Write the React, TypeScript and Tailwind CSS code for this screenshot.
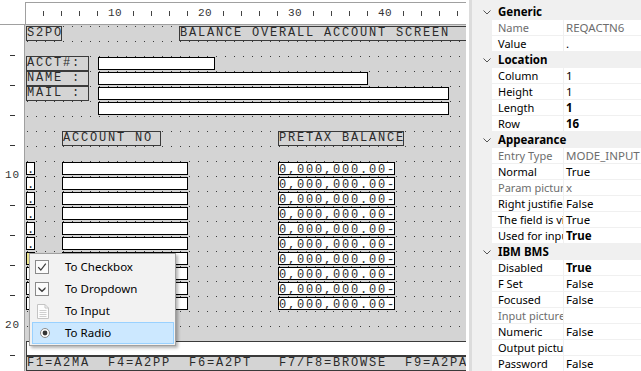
import React from "react";

const mono =
  "font-['Liberation_Mono',monospace] text-[12px] tracking-[1.8px] text-[#2b2b2b]";

function Row({ children }: { children?: React.ReactNode }) {
  return (
    <div className="grid h-[15px] shrink-0 grid-cols-[repeat(60,9px)] grid-rows-[15px]">
      {children}
    </div>
  );
}

function Lbl({ cls, text, bg }: { cls: string; text: string; bg?: string }) {
  return (
    <div
      className={`${cls} ${bg ?? ""} h-[15px] border border-[#3a3a3a] leading-[13px] whitespace-pre ${mono}`}
    >
      {text}
    </div>
  );
}

function Inp({ cls, text, sel }: { cls: string; text?: string; sel?: boolean }) {
  return (
    <div
      className={`${cls} mt-[1px] h-[13px] border border-black ${
        sel ? "bg-[#ece48c]" : "bg-white"
      } leading-[14px] whitespace-pre ${mono}`}
    >
      {text ?? ""}
    </div>
  );
}

type P = { cat?: string; name?: string; value?: string; gray?: boolean; bold?: boolean };

const props: P[] = [
  { cat: "Generic" },
  { name: "Name", value: "REQACTN6", gray: true },
  { name: "Value", value: "." },
  { cat: "Location" },
  { name: "Column", value: "1" },
  { name: "Height", value: "1" },
  { name: "Length", value: "1", bold: true },
  { name: "Row", value: "16", bold: true },
  { cat: "Appearance" },
  { name: "Entry Type", value: "MODE_INPUT", gray: true },
  { name: "Normal", value: "True" },
  { name: "Param picture", value: "x", gray: true },
  { name: "Right justified", value: "False" },
  { name: "The field is visible", value: "True" },
  { name: "Used for input", value: "True", bold: true },
  { cat: "IBM BMS" },
  { name: "Disabled", value: "True", bold: true },
  { name: "F Set", value: "False" },
  { name: "Focused", value: "False" },
  { name: "Input picture", value: "", gray: true },
  { name: "Numeric", value: "False" },
  { name: "Output picture", value: "" },
  { name: "Password", value: "False" },
];

const topCells = Array.from({ length: 24 }, (_, i) => ((i + 1) % 5 === 0 ? String(((i + 1) / 5) * 10) : ""));
const leftCells = Array.from({ length: 11 }, (_, i) => ((i + 1) % 5 === 0 ? String(((i + 1) / 5) * 10) : ""));
const dataRows = Array.from({ length: 10 }, (_, i) => i);

function CheckIcon() {
  return (
    <svg width="14" height="14" viewBox="0 0 14 14">
      <rect x="0.5" y="0.5" width="13" height="13" fill="#fbfbfb" stroke="#8a8a8a" />
      <path d="M3.2 7.2 L5.8 10 L10.8 3.6" fill="none" stroke="#3a3a3a" strokeWidth="1.2" />
    </svg>
  );
}
function DropIcon() {
  return (
    <svg width="14" height="14" viewBox="0 0 14 14">
      <rect x="0.5" y="0.5" width="13" height="13" fill="#fbfbfb" stroke="#8a8a8a" />
      <path d="M3.5 5 L7 8.3 L10.5 5 L10.5 7 L7 10.3 L3.5 7 Z" fill="#3a3a3a" />
    </svg>
  );
}
function PageIcon() {
  return (
    <svg width="12" height="15" viewBox="0 0 12 15">
      <path d="M0.5 0.5 H8 L11.5 4 V14.5 H0.5 Z" fill="#fdfdfd" stroke="#c4c4c4" />
      <path d="M8 0.5 V4 H11.5" fill="none" stroke="#c4c4c4" />
      <path d="M2.5 6.5 H9.5 M2.5 8.5 H9.5 M2.5 10.5 H9.5 M2.5 12.5 H9.5" stroke="#cfcfcf" />
    </svg>
  );
}
function RadioIcon() {
  return (
    <svg width="10" height="10" viewBox="0 0 10 10">
      <circle cx="5" cy="5" r="4.5" fill="#fbfbfb" stroke="#8a8a8a" />
      <circle cx="5" cy="5" r="2.4" fill="#333" />
    </svg>
  );
}

export default function App() {
  return (
    <div className="relative flex h-[371px] w-[641px] overflow-hidden bg-white">
      {/* Designer */}
      <div className="flex h-full w-[466px] shrink-0 flex-col">
        <div className="flex h-[25px] shrink-0 border-b border-[#a0a0a0]">
          <div className="w-[25px] shrink-0" />
          <div className="mt-[2px] flex flex-1 items-center border-l border-r border-t border-[#a0a0a0] pl-[8px]">
            {topCells.map((t, i) => (
              <div key={i} className="flex h-full w-[18px] shrink-0 items-center justify-center">
                {t ? (
                  <span className="font-['Liberation_Mono',monospace] text-[11px] tracking-[0.5px] text-[#333]">{t}</span>
                ) : (
                  <div className="h-[5px] w-[1px] bg-[#444]" />
                )}
              </div>
            ))}
          </div>
        </div>
        <div className="flex flex-1 overflow-hidden">
          <div className="flex w-[25px] shrink-0 flex-col border-r border-[#a0a0a0] pt-[15px]">
            {leftCells.map((t, i) => (
              <div key={i} className="flex h-[30px] shrink-0 items-center">
                {t ? (
                  <span className="pl-[5px] font-['Liberation_Mono',monospace] text-[11px] tracking-[1px] text-[#333]">{t}</span>
                ) : (
                  <div className="ml-[10px] h-[1px] w-[5px] bg-[#333]" />
                )}
              </div>
            ))}
          </div>
          <div className="flex flex-1 flex-col overflow-hidden bg-[#d4d4d4] bg-[radial-gradient(circle_at_0.5px_0.5px,#3a3a3a_0.7px,transparent_0.8px)] bg-[length:9px_15px] bg-[position:2px_1px] pl-[1px] pt-[1px]">
            <Row>
              <Lbl cls="col-[1/span_4]" text="S2PO" />
              <Lbl cls="col-[18/span_33]" text="BALANCE OVERALL ACCOUNT SCREEN" />
            </Row>
            <Row />
            <Row>
              <Lbl cls="col-[1/span_7]" text="ACCT#: " />
              <Inp cls="col-[9/span_13]" />
            </Row>
            <Row>
              <Lbl cls="col-[1/span_7]" text="NAME : " />
              <Inp cls="col-[9/span_30]" />
            </Row>
            <Row>
              <Lbl cls="col-[1/span_7]" text="MAIL : " />
              <Inp cls="col-[9/span_39]" />
            </Row>
            <Row>
              <Inp cls="col-[9/span_39]" />
            </Row>
            <Row />
            <Row>
              <Lbl cls="col-[5/span_11]" text="ACCOUNT NO" />
              <Lbl cls="col-[29/span_14]" text="PRETAX BALANCE" />
            </Row>
            <Row />
            {dataRows.map((i) => (
              <Row key={i}>
                <Inp cls="col-[1/span_1]" text="." sel={i === 6} />
                <Inp cls="col-[5/span_14]" />
                <Inp cls="col-[29/span_13]" text="0,000,000.00-" />
              </Row>
            ))}
            <Row />
            <Row />
            <Row>
              <Lbl cls="col-[1/span_55]" bg="bg-white" text="" />
            </Row>
            <Row>
              <Lbl cls="col-[1/span_55]" text="F1=A2MA  F4=A2PP  F6=A2PT   F7/F8=BROWSE  F9=A2PA" />
            </Row>
          </div>
        </div>
      </div>

      {/* Divider */}
      <div className="w-[3px] shrink-0 bg-white" />
      <div className="w-[3px] shrink-0 bg-[#dcdcdc]" />

      {/* Property grid */}
      <div className="flex flex-1 flex-col overflow-hidden bg-[#f0f0f0] pt-[4px] font-['Noto_Sans',sans-serif] text-[11.5px] text-black">
        {props.map((p, i) =>
          p.cat ? (
            <div key={i} className="flex h-[16px] shrink-0 items-center">
              <div className="flex w-[26px] shrink-0 items-center pl-[11px]">
                <svg width="8" height="5" viewBox="0 0 8 5">
                  <path d="M0.5 0.5 L4 4 L7.5 0.5" fill="none" stroke="#555" strokeWidth="1" />
                </svg>
              </div>
              <span className="font-bold leading-[16px]">{p.cat}</span>
            </div>
          ) : (
            <div key={i} className="flex h-[16px] shrink-0">
              <div className="w-[20px] shrink-0" />
              <div className="flex flex-1 border-b border-[#f0f0f0] bg-white">
                <div
                  className={`w-[72px] shrink-0 overflow-hidden whitespace-nowrap border-r border-[#f0f0f0] pl-[6px] text-[11px] leading-[15px] ${
                    p.gray ? "text-[#6d6d6d]" : "text-black"
                  }`}
                >
                  {p.name}
                </div>
                <div
                  className={`flex-1 overflow-hidden whitespace-nowrap pl-[2px] leading-[15px] ${
                    p.gray ? "text-[#6d6d6d]" : "text-black"
                  } ${p.bold ? "font-bold" : ""}`}
                >
                  {p.value}
                </div>
              </div>
            </div>
          )
        )}
      </div>

      {/* Context menu */}
      <div className="absolute left-[29px] top-[253px] flex w-[147px] flex-col border border-[#a0a0a0] bg-[#f2f2f2] pt-[2px] pb-[1px] font-['Noto_Sans',sans-serif] text-[11.5px] text-black shadow-[2px_2px_3px_rgba(0,0,0,0.3)]">
        {[
          { t: "To Checkbox", icon: <CheckIcon />, pad: "pl-[2px]" },
          { t: "To Dropdown", icon: <DropIcon />, pad: "pl-[2px]" },
          { t: "To Input", icon: <PageIcon />, pad: "pl-[4px]" },
          { t: "To Radio", icon: <RadioIcon />, pad: "pl-[7px]", hl: true },
        ].map((m, i) => (
          <div
            key={i}
            className={`ml-[2px] mr-[1px] flex h-[22px] items-center border ${
              m.hl ? "border-[#99d1ff] bg-[#cce8ff]" : "border-transparent"
            }`}
          >
            <div className={`flex w-[32px] shrink-0 items-center ${m.pad}`}>{m.icon}</div>
            <span className="leading-[20px]">{m.t}</span>
          </div>
        ))}
      </div>
    </div>
  );
}
